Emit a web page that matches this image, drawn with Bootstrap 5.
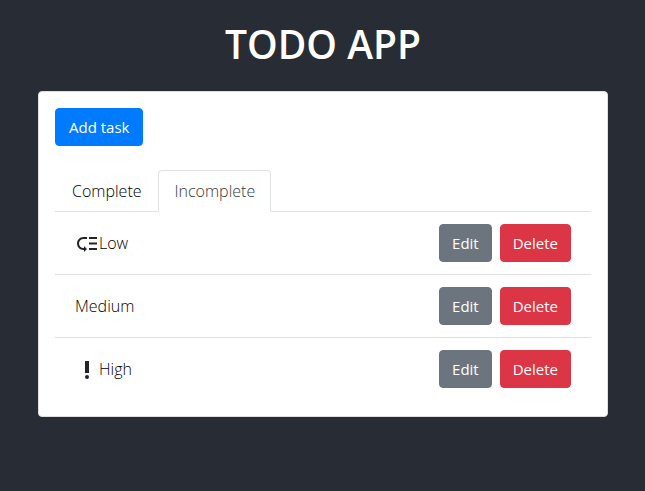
<!DOCTYPE html>
<html lang="en">
<head>
<meta charset="utf-8">
<meta name="viewport" content="width=device-width, initial-scale=1">
<title>Todo App</title>
<link href="https://cdn.jsdelivr.net/npm/bootstrap@5.3.0/dist/css/bootstrap.min.css" rel="stylesheet">
<style>
body { background: #282c34; color: #212529; font-family: "Open Sans", "Noto Sans", sans-serif; font-size: 16px; line-height: 24px; }
.app { padding: 20px 37px 0 38px; }
.app-title { font-size: 39px; line-height: 48px; font-weight: 600; margin-bottom: 23px; }
.task-card { border: 1px solid #dfdfdf; border-radius: 4px; }
.btn { font-size: 15px; line-height: 24px; border-radius: 4px; padding: 6px 12px; }
.btn-primary { --bs-btn-bg: #007bff; --bs-btn-border-color: #007bff; padding: 6px 13px; }
.task-tabs { --bs-nav-tabs-border-radius: 4px; --bs-nav-link-color: #000; --bs-nav-tabs-link-active-color: #343a40; }
.task-tabs .nav-link { font-weight: 300; padding: 8px 15px 8px 16px; }
.task-item { --bs-list-group-item-padding-x: 20px; --bs-list-group-item-padding-y: 12px; --bs-list-group-border-color: #dfdfdf; color: #000; font-weight: 300; }
.task-item svg { width: 24px; height: 24px; margin-top: 2px; color: #212529; }
</style>
</head>
<body>
<main class="app">
  <h1 class="app-title text-white text-center">TODO APP</h1>
  <div class="card task-card">
    <div class="card-body">
      <button type="button" class="btn btn-primary mb-4">Add task</button>
      <ul class="nav nav-tabs task-tabs">
        <li class="nav-item"><a class="nav-link" href="#complete">Complete</a></li>
        <li class="nav-item"><a class="nav-link active" aria-current="page" href="#incomplete">Incomplete</a></li>
      </ul>
      <ul class="list-group list-group-flush" id="incomplete">
        <li class="list-group-item task-item d-flex align-items-center">
          <svg viewBox="0 0 24 24" fill="currentColor" aria-hidden="true"><path d="M14 5h8v2h-8zm0 5.500h8v2h-8zm0 5.500h8v2h-8zM2 11.500C2 15.080 4.920 18 8.500 18H9v2l3-3-3-3v2h-.500C6.020 16 4 13.980 4 11.500S6.020 7 8.500 7H12V5H8.500C4.920 5 2 7.920 2 11.500z"/></svg>
          <span class="me-auto">Low</span>
          <div class="d-flex gap-2">
            <button type="button" class="btn btn-secondary">Edit</button>
            <button type="button" class="btn btn-danger">Delete</button>
          </div>
        </li>
        <li class="list-group-item task-item d-flex align-items-center">
          <span class="me-auto">Medium</span>
          <div class="d-flex gap-2">
            <button type="button" class="btn btn-secondary">Edit</button>
            <button type="button" class="btn btn-danger">Delete</button>
          </div>
        </li>
        <li class="list-group-item task-item d-flex align-items-center">
          <svg viewBox="0 0 24 24" fill="currentColor" aria-hidden="true"><circle cx="12" cy="19" r="2"/><path d="M10 3h4v12h-4z"/></svg>
          <span class="me-auto">High</span>
          <div class="d-flex gap-2">
            <button type="button" class="btn btn-secondary">Edit</button>
            <button type="button" class="btn btn-danger">Delete</button>
          </div>
        </li>
      </ul>
    </div>
  </div>
</main>
<script src="https://cdn.jsdelivr.net/npm/bootstrap@5.3.0/dist/js/bootstrap.bundle.min.js"></script>
</body>
</html>
